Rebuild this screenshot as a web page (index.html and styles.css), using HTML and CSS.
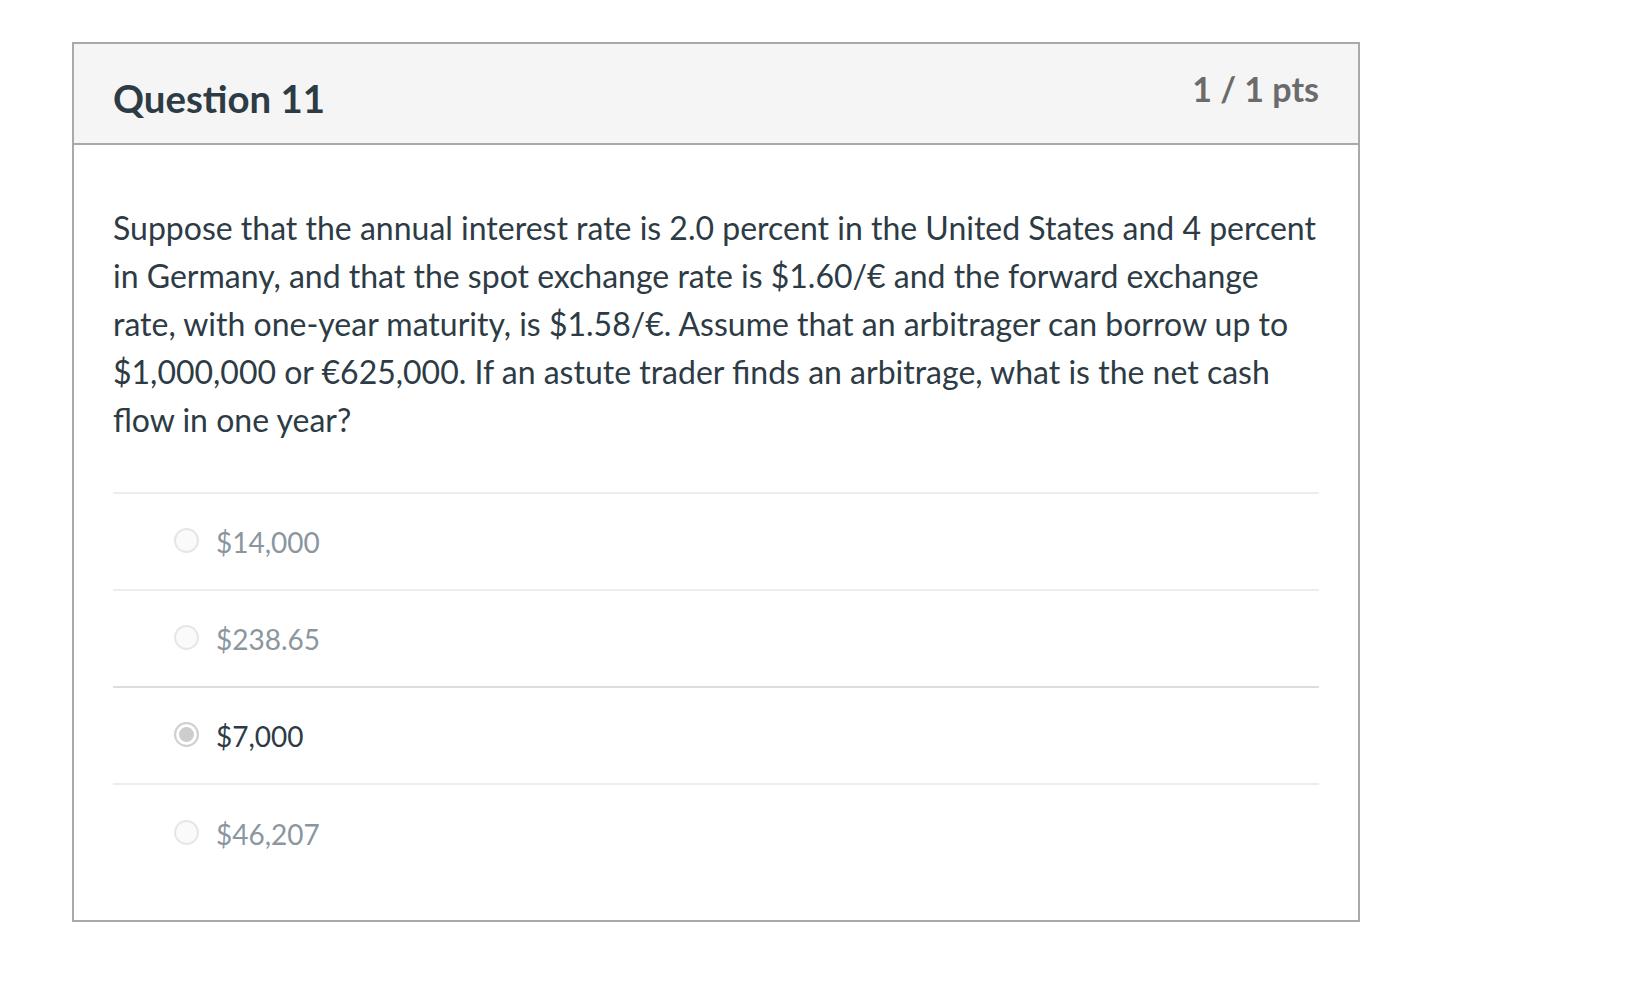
FILE: index.html
```html
<!DOCTYPE html>
<html lang="en">
<head>
<meta charset="utf-8">
<title>Question 11</title>
<link rel="stylesheet" href="styles.css">
</head>
<body>
<div class="page">
  <div class="card">
    <div class="header">
      <h2 class="title">Question 11</h2>
      <div class="pts">1 / 1 pts</div>
    </div>
    <div class="body">
      <p class="question">Suppose that the annual interest rate is 2.0 percent in the United States and 4 percent in Germany, and that the spot exchange rate is $1.60/€ and the forward exchange rate, with one-year maturity, is $1.58/€. Assume that an arbitrager can borrow up to $1,000,000 or €625,000. If an astute trader finds an arbitrage, what is the net cash flow in one year?</p>
      <div class="answers">
        <div class="answer"><span class="radio"></span><span class="label">$14,000</span></div>
        <div class="answer"><span class="radio"></span><span class="label">$238.65</span></div>
        <div class="answer selected"><span class="radio"></span><span class="label">$7,000</span></div>
        <div class="answer"><span class="radio"></span><span class="label">$46,207</span></div>
      </div>
    </div>
  </div>
</div>
</body>
</html>
```

FILE: styles.css
```css
html, body {
  margin: 0;
  padding: 0;
  background: #ffffff;
}
body {
  font-family: Lato, "Open Sans", "Liberation Sans", sans-serif;
  color: #2d3b45;
}
.page {
  padding: 42px 0 0 72px;
}
.card {
  width: 1284px;
  border: 2px solid #a9a9a9;
  background: #fff;
}
.header {
  display: flex;
  justify-content: space-between;
  align-items: flex-start;
  background: #f5f5f5;
  border-bottom: 2px solid #a9a9a9;
  height: 99px;
  padding: 0 39px;
}
.title {
  margin: 0;
  font-size: 38.4px;
  font-weight: 700;
  line-height: 1;
  padding-top: 35px;
  color: #2d3b45;
}
.pts {
  font-size: 34px;
  font-weight: 700;
  line-height: 1;
  padding-top: 28px;
  color: #6b6b6b;
}
.body {
  padding: 59px 39px 38px;
}
.question {
  margin: 0;
  font-size: 32px;
  line-height: 48px;
}
.answers {
  margin-top: 48px;
}
.answer {
  display: flex;
  align-items: center;
  border-top: 2px solid #ededed;
  height: 95px;
  padding-left: 61px;
  color: #8b969e;
  font-size: 28px;
}
.answer:last-child {
  height: 97px;
}
.answer.selected {
  border-top-color: #dddddd;
  color: #2d3b45;
}
.radio {
  box-sizing: border-box;
  width: 25px;
  height: 25px;
  border-radius: 50%;
  border: 2px solid #e6e6e6;
  background: #fafafa;
  margin-right: 17px;
  position: relative;
  top: -1px;
}
.answer.selected .radio {
  border: 2px solid #cfcfcf;
  background: #fff;
  box-shadow: inset 0 0 0 3px #fff, inset 0 0 0 12px #cdcdcd;
}
.label {
  line-height: 1;
}
```
